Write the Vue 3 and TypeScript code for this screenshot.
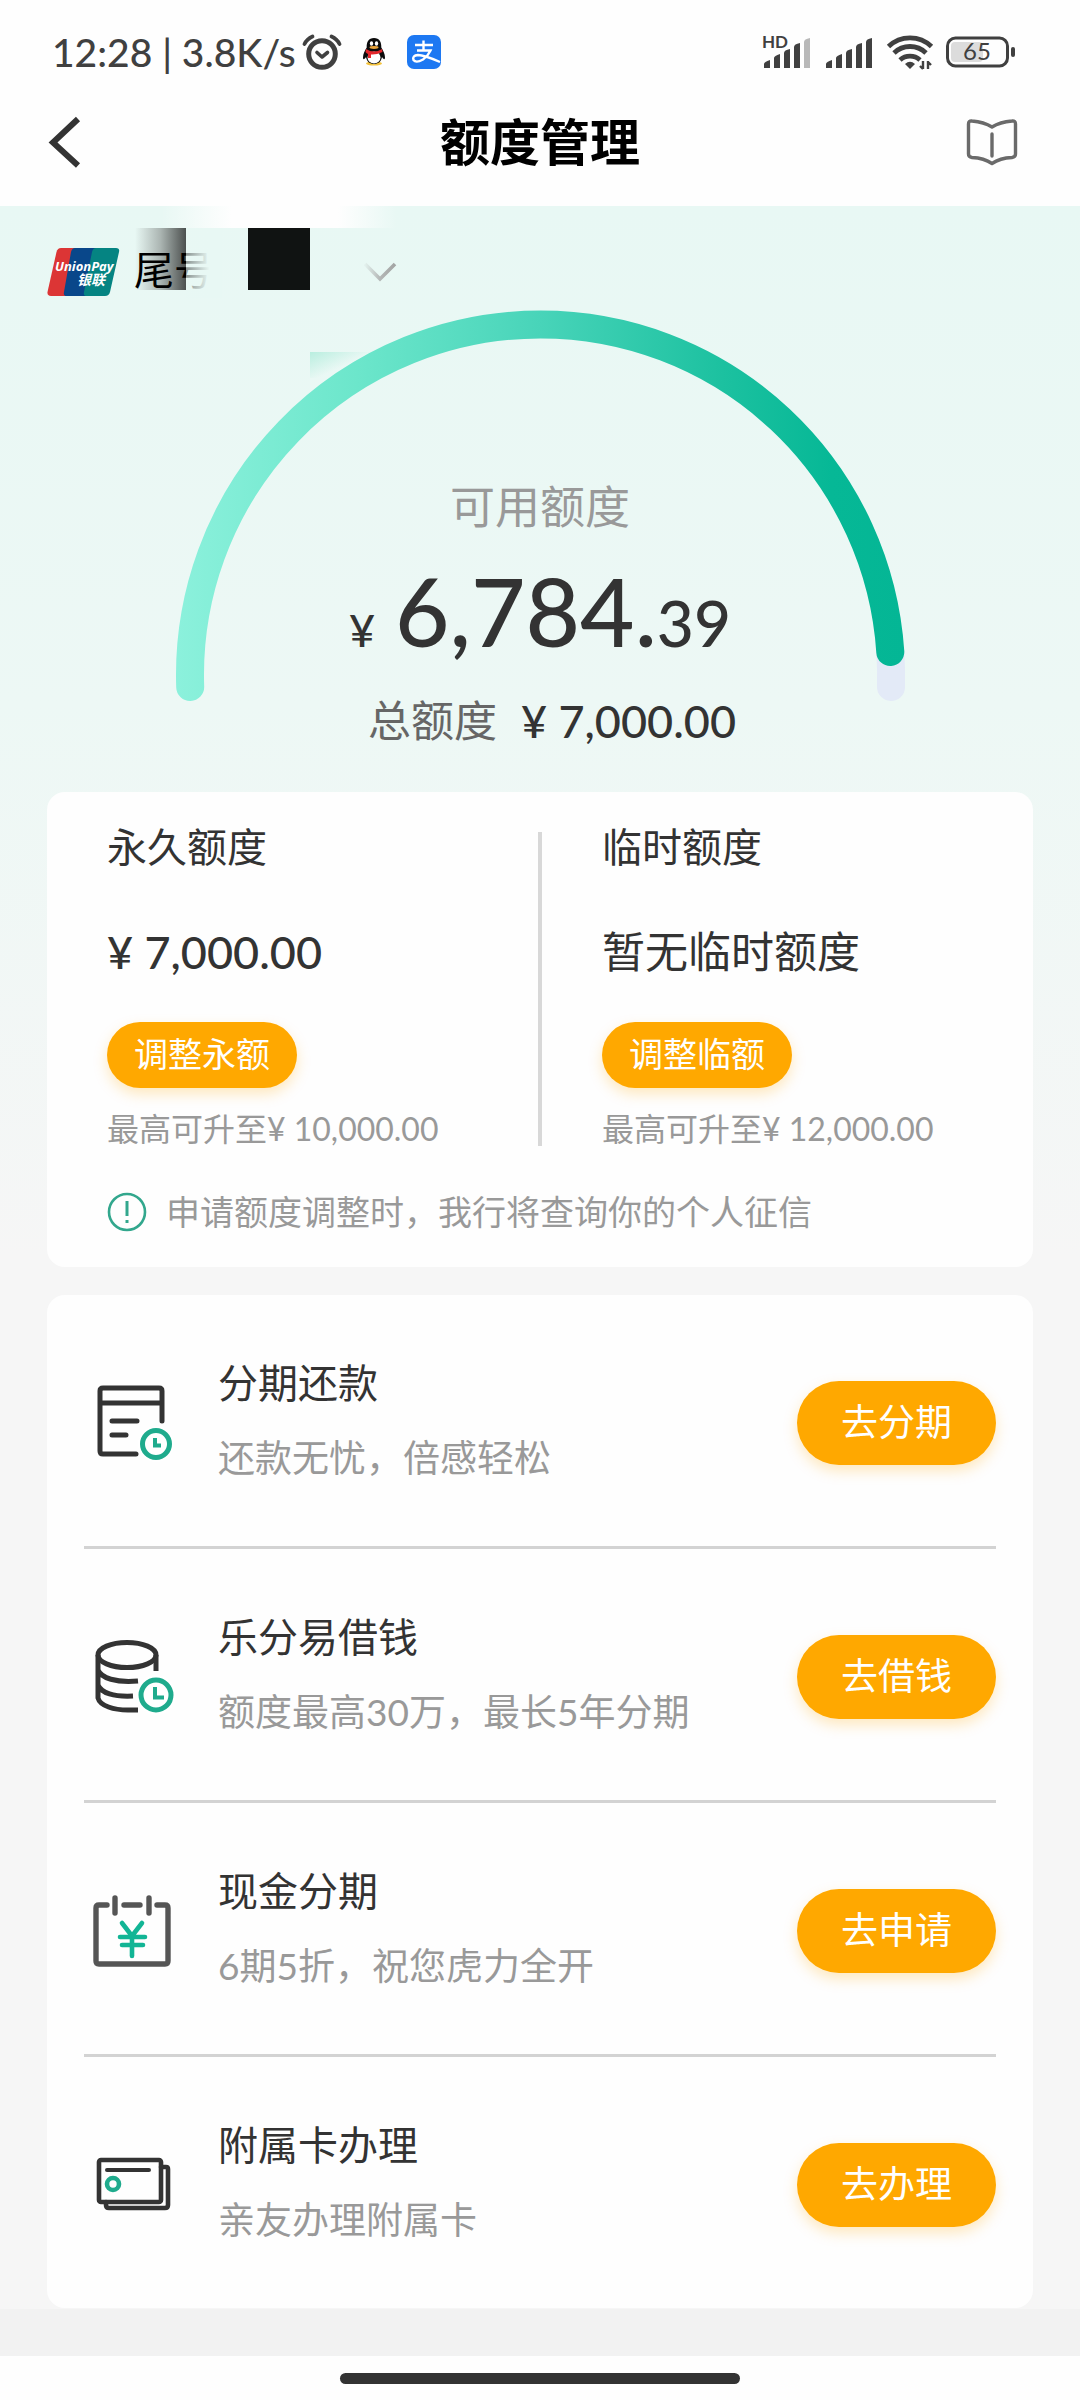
<script setup lang="ts">
interface Quota {
  title: string
  value: string
  numeric: boolean
  action: string
  limit: string
}

interface Service {
  icon: 'bill' | 'coins' | 'calendar' | 'card'
  title: string
  note: string
  action: string
}

const quotas: Quota[] = [
  { title: '永久额度', value: '¥ 7,000.00', numeric: true, action: '调整永额', limit: '最高可升至¥ 10,000.00' },
  { title: '临时额度', value: '暂无临时额度', numeric: false, action: '调整临额', limit: '最高可升至¥ 12,000.00' },
]

const services: Service[] = [
  { icon: 'bill', title: '分期还款', note: '还款无忧，倍感轻松', action: '去分期' },
  { icon: 'coins', title: '乐分易借钱', note: '额度最高30万，最长5年分期', action: '去借钱' },
  { icon: 'calendar', title: '现金分期', note: '6期5折，祝您虎力全开', action: '去申请' },
  { icon: 'card', title: '附属卡办理', note: '亲友办理附属卡', action: '去办理' },
]

const signalBars = [
  'M2 34V30Q2 28 8 26V34Z',
  'M12 34V24Q12 22 18 20V34Z',
  'M22 34V19Q22 16 28 15V34Z',
  'M32 34V13Q32 10 38 9V34Z',
  'M42 34V8Q42 5 48 4V34Z',
]
</script>

<template>
  <div class="page">
    <header class="top">
      <div class="status">
        <div class="status-left">
          <span class="clock">12:28 | 3.8K/s</span>
          <svg class="alarm" width="40" height="38" viewBox="0 0 40 38" fill="none" stroke="#404040" stroke-linecap="round" stroke-linejoin="round" aria-hidden="true">
            <circle cx="20" cy="21" r="13.3" stroke-width="5" />
            <path d="M15 19.5 20 24 25.500 19.500" stroke-width="3.600" />
            <path d="M2.500 11Q5 6 10.500 3.500M37.500 11Q35 6 29.500 3.500" stroke-width="3.800" />
          </svg>
          <svg class="penguin" width="24" height="30" viewBox="0 0 24 30" aria-hidden="true">
            <ellipse cx="12" cy="26.500" rx="8" ry="2" fill="#f3c23c" />
            <path d="M12 1C6.500 1 4.500 5 4.700 10.500 3 13 1 17 1 20.500 1 23 2.500 22.500 4 20 5 25 8 27 12 27S19 25 20 20C21.500 22.500 23 23 23 20.500 23 17 21 13 19.300 10.500 19.500 5 17.500 1 12 1Z" fill="#0b0b0b" />
            <ellipse cx="12" cy="20.500" rx="6.500" ry="6" fill="#fff" />
            <ellipse cx="9.500" cy="6.500" rx="1.700" ry="2.200" fill="#fff" />
            <ellipse cx="14.500" cy="6.500" rx="1.700" ry="2.200" fill="#fff" />
            <ellipse cx="12" cy="10.500" rx="4.500" ry="1.400" fill="#e8a33a" />
            <path d="M4 12Q12 17 20 12L20.500 15Q14 18 9 17.500V21H6V17Q4 16 3.500 15Z" fill="#e3262b" />
          </svg>
          <svg class="alipay" width="34" height="34" viewBox="0 0 34 34" fill="none" stroke="#fff" aria-hidden="true">
            <rect width="34" height="34" rx="7" fill="#1d78f2" stroke="none" />
            <path d="M8 10H26M16.500 5.500V15M10 15.500H23.500Q21 21 16 24.500 9 28.500 6.500 25 5 20.500 11 20 17 20 33 27" stroke-width="2.400" />
          </svg>
        </div>
        <div class="status-right">
          <svg width="50" height="36" viewBox="0 0 50 36" aria-hidden="true">
            <path v-for="(bar, i) in signalBars" :key="i" :d="bar" :fill="i === 4 ? '#b8b8b8' : '#404040'" />
            <text x="0" y="14" class="hd">HD</text>
          </svg>
          <svg width="50" height="36" viewBox="0 0 50 36" fill="#404040" aria-hidden="true">
            <path v-for="(bar, i) in signalBars" :key="i" :d="bar" />
          </svg>
          <svg class="wifi" width="48" height="38" viewBox="0 0 48 38" fill="none" stroke="#404040" stroke-width="4.800" aria-hidden="true">
            <path d="M2.500 13.500A31 31 0 0 1 45.500 13.500M8 20A23 23 0 0 1 40 20M14 27A15 15 0 0 1 34 27" />
            <path d="M19 31Q24 26.500 29 31L24 36Z" fill="#404040" stroke="none" />
            <path d="M37 28V36M34 33 37 36M42 36V28M42 29 45 32" stroke-width="2.400" />
          </svg>
          <svg width="70" height="32" viewBox="0 0 70 32" fill="none" aria-hidden="true">
            <rect x="5" y="6" width="32" height="20" rx="4" fill="#dcdcdc" />
            <rect x="1.500" y="2" width="60" height="28" rx="8" stroke="#404040" stroke-width="3" />
            <rect x="65" y="11" width="4" height="10" rx="2" fill="#404040" />
            <text x="31" y="24" class="battery">65</text>
          </svg>
        </div>
      </div>
      <nav class="nav">
        <button class="icon-btn" type="button" aria-label="返回">
          <svg width="34" height="50" viewBox="0 0 34 50" fill="none" stroke="#333" stroke-width="6">
            <path d="M30 2 5 25.500 30 48.500" />
          </svg>
        </button>
        <h1 class="title">额度管理</h1>
        <button class="icon-btn" type="button" aria-label="说明">
          <svg width="52" height="48" viewBox="0 0 52 48" fill="none" stroke="#6a6a6a" stroke-width="3.400" stroke-linejoin="round" stroke-linecap="round">
            <path d="M26 9Q18 4 6 3 2.500 2.500 2.500 6V36Q2.500 39 6 39.500 18 40 26 45.500 34 40 46 39.500 49.500 39 49.500 36V6Q49.500 2.500 46 3 34 4 26 9ZM26 16V38" />
          </svg>
        </button>
      </nav>
    </header>

    <main class="content">
      <button class="picker" type="button" aria-label="切换卡片">
        <span class="glare"></span>
        <span class="shade"></span>
        <svg class="unionpay" width="72" height="50" viewBox="0 0 72 50" aria-hidden="true">
          <path d="M14 1H30L20 49H4Q0 49 0.500 45L9.500 5Q10.500 1 14 1Z" fill="#dc3535" />
          <path d="M26 1H50L40 49H20Q16 49 17 45L24 5Q25 1 28 1Z" fill="#09478a" />
          <path d="M49 1H69Q73 1 72 5L63 45Q62 49 58 49H40Q36 49 37 45L45 5Q46 1 49 1Z" fill="#058482" />
          <text x="8" y="24" class="up-en">UnionPay</text>
          <text x="30" y="38" class="up-cn">银联</text>
        </svg>
        <span class="tail">尾号</span>
        <span class="fade"></span>
        <span class="redacted"></span>
        <svg class="caret" width="34" height="22" viewBox="0 0 34 22" fill="none" stroke="url(#caretInk)" stroke-width="3.600">
          <defs>
            <linearGradient id="caretInk">
              <stop offset="0" stop-color="#b4b7b6" stop-opacity="0.100" />
              <stop offset="0.500" stop-color="#b4b7b6" />
              <stop offset="1" stop-color="#a3a5a4" />
            </linearGradient>
          </defs>
          <path d="M2 3 17 18 32 3" />
        </svg>
      </button>

      <section class="gauge">
        <span class="tint"></span>
        <svg class="arc" viewBox="0 0 730 392" fill="none" stroke-width="28" stroke-linecap="round" aria-hidden="true">
          <defs>
            <linearGradient id="arcInk" gradientUnits="userSpaceOnUse" x1="0" y1="0" x2="730" y2="0">
              <stop offset="0" stop-color="#8cf1dc" />
              <stop offset="0.250" stop-color="#6ce6cb" />
              <stop offset="0.500" stop-color="#48d4b9" />
              <stop offset="0.750" stop-color="#1cc1a0" />
              <stop offset="0.900" stop-color="#06b896" />
              <stop offset="1" stop-color="#04b695" />
            </linearGradient>
          </defs>
          <path d="M715.300 342Q716.500 360 716 377" stroke="#e3eaf7" />
          <path d="M15.200 377A350.500 350.500 0 0 1 365.500 14.500A350.500 350.500 0 0 1 715.300 342" stroke="url(#arcInk)" />
        </svg>
        <div class="figures">
          <p class="label">可用额度</p>
          <p class="available"><span class="yen">¥</span><span class="whole">6,784.</span><span class="cents">39</span></p>
          <p class="total"><span class="total-label">总额度</span><span class="money">¥ 7,000.00</span></p>
        </div>
      </section>

      <section class="card">
        <div class="quotas">
          <template v-for="(quota, i) in quotas" :key="quota.title">
            <span v-if="i > 0" class="divider"></span>
            <div class="quota">
              <h2 class="heading">{{ quota.title }}</h2>
              <p :class="quota.numeric ? 'money' : 'plain'">{{ quota.value }}</p>
              <button class="pill pill-small" type="button">{{ quota.action }}</button>
              <p class="limit">{{ quota.limit }}</p>
            </div>
          </template>
        </div>
        <p class="hint">
          <svg width="40" height="40" viewBox="0 0 40 40" fill="none" stroke="#32a78d" aria-hidden="true">
            <circle cx="20" cy="20" r="18" stroke-width="2.600" />
            <path d="M20 9V24M20 28V31" stroke-width="3" />
          </svg>
          <span>申请额度调整时，我行将查询你的个人征信</span>
        </p>
      </section>

      <ul class="card services">
        <li v-for="service in services" :key="service.icon" class="service">
          <svg v-if="service.icon === 'bill'" class="icon" viewBox="0 0 80 80" fill="none" stroke="#333" stroke-width="5" stroke-linecap="round" stroke-linejoin="round" aria-hidden="true">
            <path d="M70 38V8Q70 5 67 5H11Q8 5 8 8V68Q8 71 11 71H44M8 20H70M20 38H45M20 52H34" />
            <circle cx="64" cy="61" r="18" fill="#fff" stroke="none" />
            <g stroke="#1fab8d">
              <circle cx="64" cy="61" r="13.500" />
              <path d="M63 55V62.500H69" stroke-width="4" stroke-linecap="butt" stroke-linejoin="miter" />
            </g>
          </svg>
          <svg v-else-if="service.icon === 'coins'" class="icon" viewBox="0 0 80 80" fill="none" stroke="#333" stroke-width="5" aria-hidden="true">
            <ellipse cx="35" cy="18" rx="29" ry="12.500" />
            <path d="M6 18V61C8 69 22 73 36 73H46M64 18V34M6 33C9 41 24 46 46 44M6 48C9 56 22 60 41 59" />
            <circle cx="64" cy="58" r="20" fill="#fff" stroke="none" />
            <g stroke="#1fab8d">
              <circle cx="64" cy="58" r="15" />
              <path d="M63 50V60.500H72" stroke-width="4" />
            </g>
          </svg>
          <svg v-else-if="service.icon === 'calendar'" class="icon" viewBox="0 0 80 80" fill="none" stroke="#555" stroke-width="5.400" stroke-linecap="round" stroke-linejoin="round" aria-hidden="true">
            <path d="M15 14H7Q4 14 4 17V70Q4 73 7 73H73Q76 73 76 70V17Q76 14 73 14H65M32 14H48M23 7V22M57 7V22" />
            <path d="M30 32 40 45 50 32M28 46H53M30 54H51M40 45V65" stroke="#12b595" stroke-width="4.600" />
          </svg>
          <svg v-else class="icon" viewBox="0 0 80 80" fill="none" stroke="#333" stroke-width="4.600" stroke-linecap="round" stroke-linejoin="round" aria-hidden="true">
            <path d="M69 22H74Q76 22 76 24V60Q76 63 73 63H17Q14 63 14 60V57" />
            <rect x="7" y="15" width="62" height="42" rx="2" />
            <path d="M15 25H57" stroke-width="4" />
            <circle cx="21" cy="39" r="6" stroke="#1fab8d" stroke-width="4.600" />
          </svg>
          <div class="service-text">
            <h2 class="heading">{{ service.title }}</h2>
            <p class="service-note">{{ service.note }}</p>
          </div>
          <button class="pill pill-large" type="button">{{ service.action }}</button>
        </li>
      </ul>
    </main>

    <footer class="foot"><span class="home-bar"></span></footer>
  </div>
</template>

<style>
body {
  margin: 0;
  background: #fefefe;
}
</style>

<style scoped>
.page {
  display: flex;
  flex-direction: column;
  min-height: 100vh;
  font-family: Lato, "Noto Sans CJK SC", sans-serif;
  color: #333;
}
h1, h2, p, ul {
  margin: 0;
  padding: 0;
  font-weight: 400;
}
button {
  padding: 0;
  border: 0;
  background: none;
  font: inherit;
  color: inherit;
  cursor: pointer;
}
svg {
  display: block;
  flex: none;
  overflow: visible;
}
.top {
  padding-bottom: 26px;
  background: #fefefe;
}
.status {
  display: flex;
  align-items: center;
  justify-content: space-between;
  height: 104px;
  padding: 0 64px 0 52px;
}
.status-left,
.status-right {
  display: flex;
  align-items: center;
}
.status-right {
  gap: 12px;
}
.clock {
  font-size: 39px;
  line-height: 48px;
  font-weight: 500;
  color: #404040;
  white-space: nowrap;
}
.alarm {
  margin-left: 6px;
}
.penguin {
  margin-left: 20px;
}
.alipay {
  margin-left: 21px;
}
.hd {
  font-size: 17px;
  font-weight: 700;
  fill: #404040;
}
.battery {
  font-size: 24px;
  fill: #404040;
  text-anchor: middle;
}
.nav {
  display: flex;
  align-items: center;
  justify-content: space-between;
  height: 76px;
  padding: 0 62px 0 48px;
}
.icon-btn {
  display: flex;
  width: 54px;
  justify-content: flex-start;
}
.icon-btn:last-child {
  justify-content: flex-end;
}
.title {
  padding-left: 14px;
  font-size: 50px;
  line-height: 76px;
  font-weight: 700;
  color: #000;
}
.content {
  flex: 1;
  display: flex;
  flex-direction: column;
  padding: 28px 47px 0;
  background: linear-gradient(#e8f8f4 0, #edf8f5 500px, #f6f6f6 1050px);
}
.picker {
  position: relative;
  display: flex;
  align-items: center;
  align-self: flex-start;
  height: 76px;
}
.up-en {
  font-family: "Open Sans", sans-serif;
  font-size: 13px;
  font-weight: 700;
  font-style: italic;
  fill: #fff;
}
.up-cn {
  font-family: "Noto Sans CJK SC", sans-serif;
  font-size: 14px;
  font-weight: 700;
  font-style: italic;
  fill: #fff;
}
.tail {
  position: relative;
  margin-left: 15px;
  padding-bottom: 4px;
  font-size: 40px;
  line-height: 60px;
  color: #000;
}
.caret {
  margin-left: 149px;
}
.glare,
.shade,
.fade,
.redacted,
.tint {
  position: absolute;
}
.glare {
  left: 114px;
  top: -28px;
  width: 236px;
  height: 22px;
  background: linear-gradient(90deg, transparent, #fefefe 30%, #fefefe 75%, transparent);
}
.shade {
  left: 88px;
  top: -6px;
  width: 51px;
  height: 62px;
  background: linear-gradient(90deg, transparent, #abb5b2 50%, #4c504f);
}
.fade {
  left: 139px;
  top: -6px;
  width: 36px;
  height: 70px;
  background: linear-gradient(90deg, rgba(232, 248, 244, 0.6), #e8f8f4 65%);
}
.redacted {
  left: 201px;
  top: -6px;
  width: 62px;
  height: 62px;
  background: #101312;
}
.gauge {
  position: relative;
  display: grid;
  justify-items: center;
  margin-bottom: 41px;
}
.tint {
  left: 263px;
  top: 42px;
  width: 60px;
  height: 26px;
  background: linear-gradient(155deg, #b9eedf, transparent 55%);
}
.arc {
  position: relative;
  grid-area: 1 / 1;
  width: 100%;
  max-width: 730px;
}
.figures {
  position: relative;
  grid-area: 1 / 1;
  padding-top: 167px;
  text-align: center;
}
.label {
  font-size: 45px;
  line-height: 60px;
  color: #999;
}
.available {
  display: flex;
  align-items: baseline;
  justify-content: center;
  margin-bottom: 6px;
  font-weight: 500;
}
.yen {
  margin-right: 20px;
  font-size: 45px;
  line-height: 60px;
}
.whole {
  font-size: 94px;
  line-height: 148px;
}
.cents {
  font-size: 64px;
  line-height: 60px;
}
.total {
  display: flex;
  align-items: center;
  justify-content: center;
  gap: 24px;
  padding-left: 24px;
}
.total-label {
  font-size: 43px;
  line-height: 60px;
  color: #666;
}
.money {
  font-size: 45px;
  line-height: 60px;
  font-weight: 500;
}
.plain {
  font-size: 43px;
  line-height: 60px;
}
.card {
  border-radius: 18px;
  background: #fefefe;
}
.quotas {
  display: grid;
  grid-template-columns: 1fr 4px 1fr;
  padding-top: 25px;
}
.quota {
  display: flex;
  flex-direction: column;
  align-items: flex-start;
  padding-left: 60px;
}
.divider {
  margin: 15px 0 5px;
  background: #d8d8d8;
}
.heading {
  font-size: 40px;
  line-height: 60px;
}
.quota .heading {
  margin-bottom: 45px;
}
.pill {
  flex: none;
  padding-bottom: 6px;
  border-radius: 44px;
  background: #ffa800;
  color: #fff;
  box-shadow: 0 6px 14px rgba(255, 168, 0, 0.25);
}
.pill-small {
  width: 190px;
  height: 66px;
  margin: 40px 0 19px;
  font-size: 34px;
}
.pill-large {
  width: 199px;
  height: 84px;
  font-size: 37px;
}
.limit {
  font-size: 32px;
  line-height: 44px;
  color: #999;
}
.hint {
  display: flex;
  align-items: center;
  gap: 19px;
  padding: 36px 60px 30px;
  font-size: 34px;
  line-height: 50px;
  color: #999;
}
.services {
  margin-top: 28px;
  padding: 0 37px;
  list-style: none;
}
.service {
  display: flex;
  align-items: center;
  padding: 58px 0 53px 8px;
  border-bottom: 3px solid #d3d3d3;
}
.service:last-child {
  border-bottom: 0;
}
.icon {
  width: 80px;
  height: 80px;
}
.service-text {
  flex: 1;
  padding: 0 0 10px 46px;
}
.service-note {
  margin-top: 20px;
  font-size: 37px;
  line-height: 50px;
  color: #999;
}
.foot {
  display: flex;
  justify-content: center;
  padding: 17px 0 16px;
  border-top: 47px solid #f2f2f2;
  background: #fefefe;
}
.home-bar {
  width: 37%;
  height: 11px;
  border-radius: 6px;
  background: #333;
}
</style>
